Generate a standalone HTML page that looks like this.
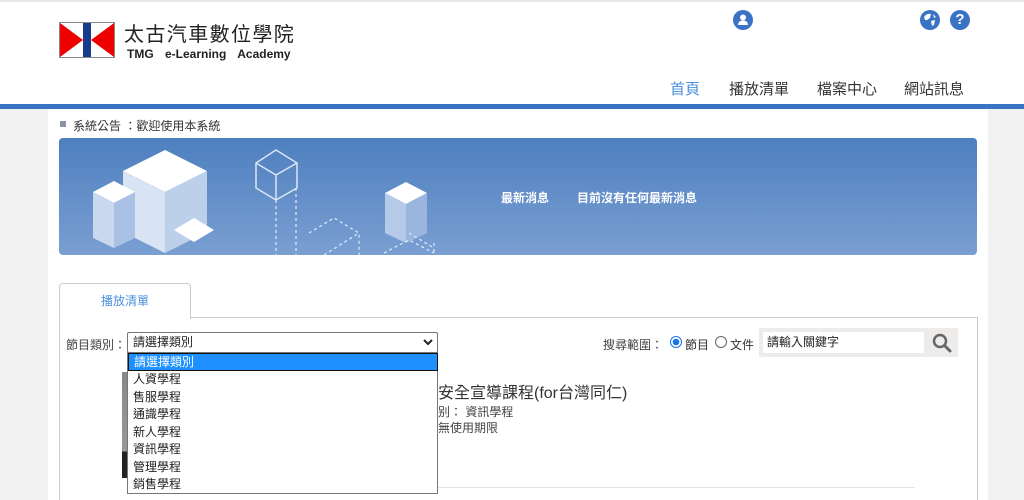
<!DOCTYPE html>
<html><head><meta charset="utf-8"><style>
*{margin:0;padding:0;box-sizing:border-box}
html,body{width:1024px;height:500px;overflow:hidden}
body{background:#f1f1f1;font-family:"Liberation Sans","Noto Sans CJK TC",sans-serif;position:relative;color:#333}
.a{position:absolute}
.hdr{left:0;top:0;width:1024px;height:104px;background:#fff;border-top:2px solid #e8e8e8}
.bl{left:0;top:104px;width:1024px;height:5px;background:#3a72c4}
.col{left:48px;top:109px;width:940px;height:391px;background:#fff}
.nav{top:78px;font-size:15px;color:#333}
.ic{width:20px;height:20px;border-radius:50%;background:#3a72c4;color:#fff;font-weight:bold;font-size:15px;text-align:center;line-height:20px}
.li{left:128px;width:310px;height:17.6px;font-size:12px;line-height:17.6px;padding-left:5px;color:#222}
</style></head><body>
<div class="a hdr"></div>
<svg class="a" style="left:59px;top:22px" width="56" height="36"><rect x="0.5" y="0.5" width="55" height="35" fill="#fff" stroke="#888"/><polygon points="1,1 24,18 1,35" fill="#e00"/><polygon points="55,1 32,18 55,35" fill="#e00"/><rect x="24" y="1" width="8" height="34" fill="#1a3a8a"/></svg>
<div class="a" style="left:124px;top:18px;font-size:20px;color:#222;letter-spacing:1.4px">太古汽車數位學院</div>
<div class="a" style="left:127px;top:47px;font-size:12px;font-weight:bold;color:#222;word-spacing:8px">TMG e-Learning Academy</div>
<div class="a ic" style="left:733px;top:10px"><svg width="20" height="20"><circle cx="10" cy="7.5" r="3" fill="#fff"/><path d="M5 15 Q5 10.5 10 10.5 Q15 10.5 15 15Z" fill="#fff"/></svg></div>
<div class="a ic" style="left:920px;top:10px"><svg width="20" height="20"><path d="M4 7 Q7 3 11 4 L10 8 L7 10 L5 10Z M11 11 L15 10 L14 15 L12 16Z M13 4 L16 7 L14 8Z" fill="#fff"/></svg></div>
<div class="a ic" style="left:950px;top:10px">?</div>
<div class="a nav" style="left:670px;color:#4a8fe0">首頁</div>
<div class="a nav" style="left:729px">播放清單</div>
<div class="a nav" style="left:817px">檔案中心</div>
<div class="a nav" style="left:904px">網站訊息</div>
<div class="a bl"></div>
<div class="a col"></div>
<div class="a" style="left:60px;top:121px;width:6px;height:6px;background:#8a95a8"></div>
<div class="a" style="left:73px;top:117px;font-size:12px;color:#333">系統公告 ：歡迎使用本系統</div>
<div class="a" style="left:59px;top:138px;width:918px;height:117px;border-radius:4px;background:linear-gradient(#4e7fbf,#7a9fd2);overflow:hidden">
<svg width="918" height="117" style="position:absolute;left:0;top:0">
<polygon points="106,12 148,33 106,54 64,33" fill="#fff"/>
<polygon points="106,54 148,33 148,94 106,115" fill="#bcd0ea"/>
<polygon points="106,54 64,33 64,94 106,115" fill="#d8e4f3"/>
<polygon points="34,54 55,43 76,54 55,65" fill="#fff"/>
<polygon points="34,54 55,65 55,110 34,100" fill="#c9d8ee"/>
<polygon points="76,54 55,65 55,110 76,100" fill="#a9c2e4"/>
<polygon points="326,55 347,44 368,55 347,66" fill="#fff"/>
<polygon points="326,55 347,66 347,105 326,95" fill="#b5cae8"/>
<polygon points="368,55 347,66 347,105 368,95" fill="#9ab6de"/>
<polygon points="115,92 135,80 155,92 135,104" fill="#fff"/>
<g fill="none" stroke="#dbe6f5" stroke-width="1.5"><polygon points="197,25 217,12 238,25 238,50 217,62 197,50"/><path d="M197,25 L217,37 L238,25 M217,37 L217,62"/></g>
<g fill="none" stroke="#dbe6f5" stroke-width="1.3" stroke-dasharray="3,3"><path d="M217,62 L217,117 M237,50 L237,117 M250,95 L275,80 L300,95 L300,117 M265,117 L300,95 M350,95 L375,110 M325,115 L350,102 L375,115 M375,105 L375,117"/></g>
</svg>
<div class="a" style="left:442px;top:51px;color:#fff;font-size:12px;font-weight:bold">最新消息</div>
<div class="a" style="left:518px;top:51px;color:#fff;font-size:12px;font-weight:bold">目前沒有任何最新消息</div>
</div>
<div class="a" style="left:59px;top:317px;width:919px;height:190px;border:1px solid #ccc"></div>
<div class="a" style="left:59px;top:283px;width:132px;height:36px;border:1px solid #ccc;border-bottom:none;border-radius:4px 4px 0 0;background:#fff;color:#4a8fe0;font-size:12px;text-align:center;line-height:34px">播放清單</div>
<div class="a" style="left:66px;top:336px;font-size:12px;color:#444">節目類別：</div>
<div class="a" style="left:122px;top:372px;width:6px;height:106px;background:linear-gradient(#888 0,#999 75%,#222 75%)"></div>
<div class="a" style="left:130px;top:487px;width:785px;height:1px;background:#e4e4e4"></div>
<div class="a" style="left:438px;top:379px;font-size:16px;color:#333">安全宣導課程(for台灣同仁)</div>
<div class="a" style="left:438px;top:403px;font-size:12px;color:#444">别： 資訊學程</div>
<div class="a" style="left:438px;top:419px;font-size:12px;color:#444">無使用期限</div>
<div class="a" style="left:603px;top:336px;font-size:12px;color:#444">搜尋範圍：</div>
<div class="a" style="left:670px;top:336px;width:12px;height:12px;border-radius:50%;border:1px solid #1a73e8;background:radial-gradient(#1a73e8 3px,#fff 3.5px)"></div>
<div class="a" style="left:685px;top:336px;font-size:12px">節目</div>
<div class="a" style="left:715px;top:336px;width:12px;height:12px;border-radius:50%;border:1px solid #666"></div>
<div class="a" style="left:730px;top:336px;font-size:12px">文件</div>
<div class="a" style="left:759px;top:328px;width:199px;height:29px;background:#eeeceb"></div>
<div class="a" style="left:763px;top:332px;width:161px;height:21px;background:#fff;font-size:12px;line-height:21px;padding-left:4px;color:#222">請輸入關鍵字</div>
<svg class="a" style="left:931px;top:332px" width="22" height="22"><circle cx="9" cy="9" r="6" fill="none" stroke="#666" stroke-width="2.5"/><path d="M13.5 13.5 L19 19" stroke="#666" stroke-width="3" stroke-linecap="round"/></svg>
<div class="a" style="left:127px;top:332px;width:311px;height:21px;border:1px solid #767676;border-radius:2px;background:#fff;font-size:12px;line-height:19px;padding-left:5px;color:#222">請選擇類別<svg style="position:absolute;right:4px;top:6px" width="10" height="7"><path d="M1 1 L5 5 L9 1" stroke="#222" stroke-width="2" fill="none"/></svg></div>
<div class="a" style="left:127px;top:352px;width:311px;height:142px;border:1px solid #767676;background:#fff"></div>
<div class="a li" style="top:353px;background:#1e90ff;color:#fff;border:1px solid #111">請選擇類別</div>
<div class="a li" style="top:371px">人資學程</div>
<div class="a li" style="top:388.6px">售服學程</div>
<div class="a li" style="top:406.2px">通識學程</div>
<div class="a li" style="top:423.8px">新人學程</div>
<div class="a li" style="top:441.4px">資訊學程</div>
<div class="a li" style="top:459px">管理學程</div>
<div class="a li" style="top:476.4px">銷售學程</div>
</body></html>
